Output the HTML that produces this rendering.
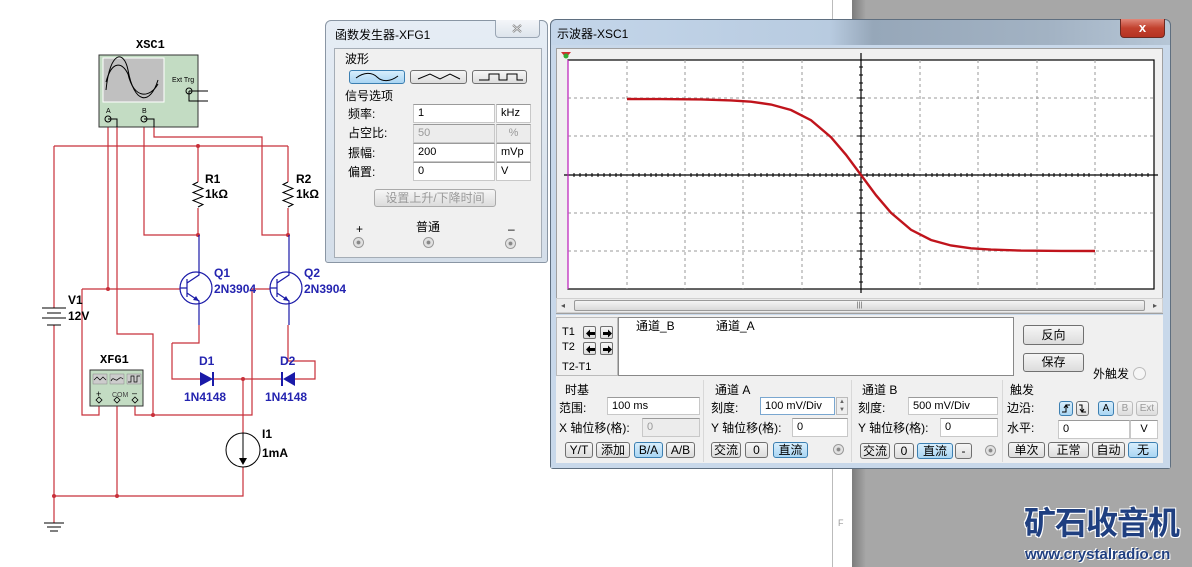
<!DOCTYPE html>
<html><head><meta charset="utf-8">
<style>
*{margin:0;padding:0;box-sizing:border-box}
body{width:1192px;height:567px;overflow:hidden;position:relative;background:#fff;font-family:"Liberation Sans","Noto Sans CJK SC",sans-serif;font-size:12px;color:#000}
.a{position:absolute}
.t{position:absolute;white-space:nowrap;line-height:14px}
.in{position:absolute;background:#fff;border:1px solid #c8c8c8;border-top-color:#9a9a9a;font-size:11px;padding:2px 4px;line-height:12px}
.gr{background:#ececec;color:#999}
.b{position:absolute;border:1px solid #707070;border-radius:3px;background:linear-gradient(#f6f6f6,#dcdcdc);text-align:center;font-size:12px;line-height:14px}
.bl{background:linear-gradient(#d8eefc,#a9d5f3);border-color:#3c7fb1}
.rad{position:absolute;width:11px;height:11px;border-radius:50%;border:1px solid #999;background:radial-gradient(#888 25%,#ddd 35%,#eee)}
.ar{position:absolute;width:13px;height:13px;border:1px solid #707070;border-radius:2px;background:linear-gradient(#f6f6f6,#dcdcdc)}
.ar svg{position:absolute;left:1px;top:1px}
</style></head><body>
<div class="a" style="left:852px;top:0;width:340px;height:567px;background:#a7a7a7"></div>
<div class="a" style="left:852px;top:0;width:14px;height:567px;background:linear-gradient(90deg,#7c7c7c,#a7a7a7)"></div>
<div class="a" style="left:832px;top:0;width:1px;height:567px;background:#bbb"></div>
<div class="t" style="left:838px;top:516px;font-size:9px;color:#999">F</div>

<svg class="a" style="left:0;top:0" width="370" height="567" viewBox="0 0 370 567">
<g fill="none" stroke="#c8303a" stroke-width="1.2">
<path d="M54 146H288M54 146V308M54 325V523"/>
<path d="M108 119V289M117 119V334H153V415"/>
<path d="M144 119V235H198M154 119V137H262V235H288"/>
<path d="M198 146V182M198 208V235M288 146V182M288 208V235"/>
<path d="M82 289H180M82 289V415H99V400"/>
<path d="M135 400V415H252V289H270"/>
<path d="M117 400V496M54 496H243V467M243 379V433"/>
<path d="M172 343V379H200M213 379H283M295 379H315V361H288V325"/>
<path d="M199 325V343H172"/>
</g>
<g fill="#c8303a"><circle cx="198" cy="146" r="2"/><circle cx="198" cy="235" r="2"/><circle cx="288" cy="235" r="2"/><circle cx="108" cy="289" r="2"/><circle cx="153" cy="415" r="2"/><circle cx="243" cy="379" r="2"/><circle cx="54" cy="496" r="2"/><circle cx="117" cy="496" r="2"/></g>
<g fill="none" stroke="#000" stroke-width="1">
<path d="M198 182l-5 2.5 10 4-10 4 10 4-10 4 10 4-5 2.5"/>
<path d="M288 182l-5 2.5 10 4-10 4 10 4-10 4 10 4-5 2.5"/>
<path d="M42 308H66M47 313H61M42 318H66M47 325H61"/>
<path d="M44 523H64M47 527H61M50 531H58"/>
<circle cx="243" cy="450" r="17"/><path d="M243 433V460"/>
</g>
<path d="M239 458L247 458 243 465Z" fill="#000"/>
<g fill="none" stroke="#1a1aa8" stroke-width="1.2">
<circle cx="196" cy="288" r="16"/><circle cx="286" cy="288" r="16"/>
<path d="M187 279V297M180 288H187M187 283L199 275V235M187 293L199 301V325"/>
<path d="M277 279V297M270 288H277M277 283L289 275V235M277 293L289 301V325"/>
</g>
<g fill="#1a1aa8"><path d="M199 301l-6-1 3-4z"/><path d="M289 301l-6-1 3-4z"/>
<path d="M200 372L213 379 200 386Z"/><rect x="212" y="372" width="2" height="14"/>
<path d="M295 372L283 379 295 386Z"/><rect x="281" y="372" width="2" height="14"/></g>
<rect x="99" y="55" width="99" height="72" fill="#c3dcc3" stroke="#333"/>
<rect x="103" y="58" width="61" height="44" fill="#c0c0c0" stroke="#fff"/>
<path d="M106 90C110 50 124 50 128 70C134 104 150 106 158 80" fill="none" stroke="#000"/>
<path d="M106 82C112 60 122 62 128 74C134 100 150 98 158 84" fill="none" stroke="#000"/>
<g fill="none" stroke="#000"><circle cx="108" cy="119" r="3"/><circle cx="144" cy="119" r="3"/><circle cx="189" cy="91" r="3"/><path d="M189 91H208M189 91V101H208M108 119H117V127M144 119H154V127"/></g>
<text x="172" y="82" font-size="7" font-family="Liberation Sans">Ext Trg</text>
<text x="106" y="113" font-size="7">A</text><text x="142" y="113" font-size="7">B</text>
<rect x="90" y="370" width="53" height="36" fill="#c3dcc3" stroke="#333"/>
<rect x="93" y="374" width="14" height="10" fill="#ccc" stroke="#888" stroke-width=".5"/><rect x="110" y="374" width="14" height="10" fill="#ccc" stroke="#888" stroke-width=".5"/><rect x="127" y="374" width="14" height="10" fill="#ccc" stroke="#888" stroke-width=".5"/>
<path d="M94 380l3-3 3 3 3-3 3 3M111 381c2-5 4 0 6-1s3-4 6-1M128 382h3v-6h3v6h3v-6h3" fill="none" stroke="#000" stroke-width=".7"/>
<text x="112" y="397" font-size="7" fill="#444">COM</text>
<text x="96" y="397" font-size="9">+</text><text x="132" y="396" font-size="9">–</text>
<g fill="none" stroke="#000" stroke-width=".8"><path d="M99 397l3 3-3 3-3-3z"/><path d="M117 397l3 3-3 3-3-3z"/><path d="M135 397l3 3-3 3-3-3z"/></g>
<g font-family="Liberation Mono" font-weight="bold" font-size="12"><text x="136" y="48">XSC1</text><text x="100" y="363">XFG1</text></g>
<g font-family="Liberation Sans" font-weight="bold" font-size="12">
<text x="205" y="183">R1</text><text x="205" y="198">1kΩ</text>
<text x="296" y="183">R2</text><text x="296" y="198">1kΩ</text>
<text x="68" y="304">V1</text><text x="68" y="320">12V</text>
<text x="262" y="438">I1</text><text x="262" y="457">1mA</text>
<g fill="#2424b0"><text x="214" y="277">Q1</text><text x="214" y="293">2N3904</text><text x="304" y="277">Q2</text><text x="304" y="293">2N3904</text>
<text x="199" y="365">D1</text><text x="184" y="401">1N4148</text><text x="280" y="365">D2</text><text x="265" y="401">1N4148</text></g></g>
</svg>

<div class="a" style="left:325px;top:20px;width:223px;height:243px;border:1px solid #8a96a4;border-radius:6px 6px 3px 3px;background:linear-gradient(#e6edf5,#d4dee9)"></div>
<div class="t" style="left:335px;top:28px">函数发生器-XFG1</div>
<div class="a" style="left:495px;top:20px;width:45px;height:18px;border:1px solid #9aa6b4;border-top:none;border-radius:0 0 4px 4px;background:linear-gradient(#f4f6f9,#dde4ec)"><svg width="43" height="17"><path d="M17 5l8 7M25 5l-8 7" stroke="#888" stroke-width="2.2"/><path d="M17 5l8 7M25 5l-8 7" stroke="#f4f6f9" stroke-width=".6"/></svg></div>
<div class="a" style="left:334px;top:48px;width:208px;height:210px;background:#f0f0f0;border:1px solid #a5adb6"></div>
<div class="t" style="left:345px;top:52px">波形</div>
<div class="b bl" style="left:349px;top:70px;width:56px;height:14px"><svg width="50" height="10"><path d="M4 6C12 0 20 0 25 5S38 10 46 4" fill="none" stroke="#000"/></svg></div>
<div class="b" style="left:410px;top:70px;width:57px;height:14px"><svg width="50" height="10"><path d="M4 7L16 2 26 7 36 2 46 7" fill="none" stroke="#000"/></svg></div>
<div class="b" style="left:472px;top:70px;width:55px;height:14px"><svg width="50" height="10"><path d="M4 8H14V2H24V8H32V2H42V8H48" fill="none" stroke="#000"/></svg></div>
<div class="t" style="left:345px;top:89px">信号选项</div>
<div class="t" style="left:348px;top:107px">频率:</div><div class="in" style="left:413px;top:104px;width:82px;height:19px">1</div><div class="in" style="left:496px;top:104px;width:35px;height:19px">kHz</div>
<div class="t" style="left:348px;top:126px">占空比:</div><div class="in gr" style="left:413px;top:124px;width:82px;height:19px">50</div><div class="in gr" style="left:496px;top:124px;width:35px;height:19px;text-align:center">%</div>
<div class="t" style="left:348px;top:146px">振幅:</div><div class="in" style="left:413px;top:143px;width:82px;height:19px">200</div><div class="in" style="left:496px;top:143px;width:35px;height:19px">mVp</div>
<div class="t" style="left:348px;top:165px">偏置:</div><div class="in" style="left:413px;top:162px;width:82px;height:19px">0</div><div class="in" style="left:496px;top:162px;width:35px;height:19px">V</div>
<div class="b" style="left:374px;top:189px;width:122px;height:18px;color:#999;line-height:16px;border-color:#aaa">设置上升/下降时间</div>
<div class="t" style="left:356px;top:222px">+</div><div class="t" style="left:416px;top:220px">普通</div><div class="t" style="left:508px;top:222px">–</div>
<div class="rad" style="left:353px;top:237px"></div><div class="rad" style="left:423px;top:237px"></div><div class="rad" style="left:505px;top:238px"></div>

<div class="a" style="left:550px;top:19px;width:621px;height:450px;border:1px solid #5f6f80;border-radius:6px 6px 3px 3px;background:linear-gradient(90deg,#c4d6ea 0%,#b8cbe0 45%,#96a7b9 52%,#a2b2c3 80%,#b6c6d6 100%)"></div>
<div class="a" style="left:551px;top:45px;width:619px;height:423px;background:#c8d8ea"></div>
<div class="t" style="left:557px;top:27px">示波器-XSC1</div>
<div class="a" style="left:1120px;top:19px;width:45px;height:19px;border:1px solid #6b2a22;border-top:none;border-radius:0 0 4px 4px;background:linear-gradient(#e0887a,#c2412e 50%,#b53322);color:#fff;text-align:center;font-weight:bold;font-size:13px;line-height:17px">x</div>
<div class="a" style="left:556px;top:48px;width:607px;height:266px;background:#f0f0f0;border:1px solid #a0a0a0"></div>
<svg class="a" style="left:556px;top:48px" width="607" height="266" viewBox="556 48 607 266">
<rect x="568" y="60" width="586" height="229" fill="#fff" stroke="#000" stroke-width="1.2"/>
<g stroke="#999" stroke-dasharray="3,3" stroke-width="1">
<path d="M627 60V289M685 60V289M743 60V289M802 60V289M920 60V289M978 60V289M1037 60V289M1095 60V289"/>
<path d="M568 98H1154M568 136H1154M568 213H1154M568 251H1154"/></g>
<path d="M564 175H1158M861 53V293" stroke="#000" stroke-width="1.2"/>
<path d="M568 60V289" stroke="#e020e0"/>
<path d="M574 173v4M580 173v4M586 173v4M592 173v4M598 173v4M604 173v4M610 173v4M616 173v4M621 173v4M633 173v4M639 173v4M645 173v4M651 173v4M656 173v4M662 173v4M668 173v4M674 173v4M680 173v4M691 173v4M697 173v4M703 173v4M709 173v4M715 173v4M720 173v4M726 173v4M732 173v4M738 173v4M749 173v4M755 173v4M761 173v4M767 173v4M773 173v4M779 173v4M784 173v4M790 173v4M796 173v4M808 173v4M814 173v4M820 173v4M826 173v4M832 173v4M837 173v4M843 173v4M849 173v4M855 173v4M867 173v4M873 173v4M879 173v4M885 173v4M890 173v4M896 173v4M902 173v4M908 173v4M914 173v4M926 173v4M932 173v4M937 173v4M943 173v4M949 173v4M955 173v4M961 173v4M967 173v4M972 173v4M984 173v4M990 173v4M996 173v4M1002 173v4M1008 173v4M1013 173v4M1019 173v4M1025 173v4M1031 173v4M1043 173v4M1049 173v4M1054 173v4M1060 173v4M1066 173v4M1072 173v4M1078 173v4M1084 173v4M1089 173v4M1101 173v4M1107 173v4M1113 173v4M1119 173v4M1125 173v4M1130 173v4M1136 173v4M1142 173v4M1148 173v4" stroke="#000"/>
<path d="M859 67h4M859 75h4M859 83h4M859 90h4M859 106h4M859 113h4M859 121h4M859 128h4M859 144h4M859 152h4M859 159h4M859 167h4M859 182h4M859 190h4M859 198h4M859 205h4M859 221h4M859 228h4M859 236h4M859 244h4M859 259h4M859 267h4M859 274h4M859 282h4M857 98h8M857 136h8M857 213h8M857 251h8" stroke="#000"/>
<polyline fill="none" stroke="#c0141c" stroke-width="2.4" points="627,99 661,99.1 701,99.4 731,100.4 751,101.7 771,104.5 791,110 811,120.2 831,137.2 846,154.8 861,175 876,195.2 891,212.8 911,229.8 931,240 951,245.5 971,248.3 991,249.6 1021,250.6 1061,250.9 1095,251"/>
<path d="M561 52h10l-5 6z" fill="#d03030"/><circle cx="566" cy="56" r="2.5" fill="#3a3"/>
</svg>
<div class="a" style="left:556px;top:298px;width:607px;height:15px;background:#ececec;border:1px solid #d0d0d0"></div>
<div class="a" style="left:574px;top:300px;width:571px;height:11px;background:linear-gradient(#f4f4f4,#d9d9d9);border:1px solid #9a9a9a;border-radius:2px;text-align:center;font-size:7px;line-height:9px;color:#555">|||</div>
<div class="t" style="left:561px;top:299px;font-size:8px;color:#555">◂</div><div class="t" style="left:1153px;top:299px;font-size:8px;color:#555">▸</div>
<div class="a" style="left:556px;top:315px;width:607px;height:148px;background:#f0f0f0"></div>
<div class="a" style="left:556px;top:317px;width:62px;height:59px;border:1px solid #bbb"></div>
<div class="t" style="left:562px;top:325px;font-size:11px">T1</div><div class="t" style="left:562px;top:340px;font-size:11px">T2</div><div class="t" style="left:562px;top:360px;font-size:11px">T2-T1</div>
<div class="ar" style="left:583px;top:326px"><svg width="11" height="11"><path d="M1 5.5L5 1.5V4H10V7H5V9.5Z"/></svg></div>
<div class="ar" style="left:600px;top:326px"><svg width="11" height="11"><path d="M10 5.5L6 1.5V4H1V7H6V9.5Z"/></svg></div>
<div class="ar" style="left:583px;top:342px"><svg width="11" height="11"><path d="M1 5.5L5 1.5V4H10V7H5V9.5Z"/></svg></div>
<div class="ar" style="left:600px;top:342px"><svg width="11" height="11"><path d="M10 5.5L6 1.5V4H1V7H6V9.5Z"/></svg></div>
<div class="a" style="left:618px;top:317px;width:396px;height:59px;background:#fff;border:1px solid #888"></div>
<div class="t" style="left:636px;top:319px">通道_B</div><div class="t" style="left:716px;top:319px">通道_A</div>
<div class="b" style="left:1023px;top:325px;width:61px;height:20px;line-height:18px">反向</div>
<div class="b" style="left:1023px;top:353px;width:61px;height:19px;line-height:17px">保存</div>
<div class="t" style="left:1093px;top:367px">外触发</div><div class="a" style="left:1133px;top:367px;width:13px;height:13px;border-radius:50%;border:1px solid #bbb;background:#f6f6f6"></div>
<div class="a" style="left:703px;top:380px;width:1px;height:82px;background:#d8d8d8"></div>
<div class="a" style="left:851px;top:380px;width:1px;height:82px;background:#d8d8d8"></div>
<div class="a" style="left:1002px;top:380px;width:1px;height:82px;background:#d8d8d8"></div>
<div class="t" style="left:565px;top:383px">时基</div>
<div class="t" style="left:559px;top:401px">范围:</div><div class="in" style="left:607px;top:397px;width:93px;height:18px">100 ms</div>
<div class="t" style="left:559px;top:421px">X 轴位移(格):</div><div class="in gr" style="left:642px;top:418px;width:58px;height:19px">0</div>
<div class="b" style="left:565px;top:442px;width:28px;height:16px;line-height:14px">Y/T</div>
<div class="b" style="left:596px;top:442px;width:34px;height:16px;line-height:14px">添加</div>
<div class="b bl" style="left:634px;top:442px;width:29px;height:16px;line-height:14px">B/A</div>
<div class="b" style="left:666px;top:442px;width:29px;height:16px;line-height:14px">A/B</div>
<div class="t" style="left:715px;top:383px">通道 A</div>
<div class="t" style="left:711px;top:401px">刻度:</div><div class="in" style="left:760px;top:397px;width:75px;height:18px;border-color:#7aa7d0">100 mV/Div</div>
<div class="a" style="left:836px;top:397px;width:12px;height:18px;border:1px solid #bbb;background:#eee;font-size:6px;line-height:8px;text-align:center;color:#666">▲<br>▼</div>
<div class="t" style="left:711px;top:421px">Y 轴位移(格):</div><div class="in" style="left:792px;top:418px;width:56px;height:19px">0</div>
<div class="b" style="left:711px;top:442px;width:30px;height:16px;line-height:14px">交流</div>
<div class="b" style="left:745px;top:442px;width:23px;height:16px;line-height:14px">0</div>
<div class="b bl" style="left:773px;top:442px;width:35px;height:16px;line-height:14px">直流</div>
<div class="rad" style="left:833px;top:444px"></div>
<div class="t" style="left:862px;top:383px">通道 B</div>
<div class="t" style="left:858px;top:401px">刻度:</div><div class="in" style="left:908px;top:397px;width:90px;height:18px">500 mV/Div</div>
<div class="t" style="left:858px;top:421px">Y 轴位移(格):</div><div class="in" style="left:940px;top:418px;width:58px;height:19px">0</div>
<div class="b" style="left:860px;top:443px;width:30px;height:16px;line-height:14px">交流</div>
<div class="b" style="left:894px;top:443px;width:20px;height:16px;line-height:14px">0</div>
<div class="b bl" style="left:917px;top:443px;width:36px;height:16px;line-height:14px">直流</div>
<div class="b" style="left:955px;top:443px;width:17px;height:16px;line-height:14px">-</div>
<div class="rad" style="left:985px;top:445px"></div>
<div class="t" style="left:1010px;top:383px">触发</div>
<div class="t" style="left:1007px;top:401px">边沿:</div>
<div class="b bl" style="left:1059px;top:401px;width:14px;height:15px"><svg width="12" height="13"><path d="M2 10H6V3H10M4 6l2-3 2 3" fill="none" stroke="#000"/></svg></div>
<div class="b" style="left:1076px;top:401px;width:13px;height:15px"><svg width="11" height="13"><path d="M2 3H5V10H9M3 7l2 3 2-3" fill="none" stroke="#000"/></svg></div>
<div class="b bl" style="left:1098px;top:401px;width:16px;height:15px;font-size:10px;line-height:13px">A</div>
<div class="b" style="left:1117px;top:401px;width:16px;height:15px;font-size:10px;line-height:13px;color:#999;border-color:#bbb">B</div>
<div class="b" style="left:1136px;top:401px;width:22px;height:15px;font-size:10px;line-height:13px;color:#999;border-color:#bbb">Ext</div>
<div class="t" style="left:1007px;top:421px">水平:</div><div class="in" style="left:1058px;top:420px;width:72px;height:19px">0</div><div class="in" style="left:1130px;top:420px;width:28px;height:19px;text-align:center">V</div>
<div class="b" style="left:1008px;top:442px;width:37px;height:16px;line-height:14px">单次</div>
<div class="b" style="left:1048px;top:442px;width:41px;height:16px;line-height:14px">正常</div>
<div class="b" style="left:1092px;top:442px;width:33px;height:16px;line-height:14px">自动</div>
<div class="b bl" style="left:1128px;top:442px;width:30px;height:16px;line-height:14px">无</div>

<div class="t" style="left:1024px;top:503px;font-size:32px;line-height:36px;font-weight:bold;color:#1f3f80;letter-spacing:-1px;font-family:'Noto Sans CJK SC','WenQuanYi Zen Hei',sans-serif;text-shadow:1px 1px 0 #fff,-1px -1px 0 #fff,1px -1px 0 #fff,-1px 1px 0 #fff">矿石收音机</div>
<div class="t" style="left:1025px;top:546px;font-size:15px;line-height:17px;font-weight:bold;color:#1f3f80;text-shadow:1px 1px 0 #fff,-1px -1px 0 #fff">www.crystalradio.cn</div>
</body></html>
